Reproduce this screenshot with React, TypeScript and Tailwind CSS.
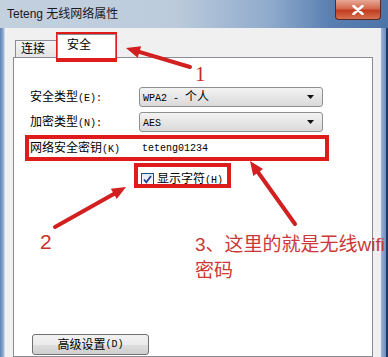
import React from 'react'

const ui = "font-['Liberation_Sans','Noto_Sans_CJK_SC',sans-serif]"
const mono = "font-['Liberation_Mono','Noto_Sans_CJK_SC',monospace]"

// Ascii parts in the dialog are drawn half-width, like SimSun 12px
function Asc({ children }: { children: React.ReactNode }) {
  return <span className={`${mono} text-[10px]`}>{children}</span>
}

function Select({ value }: { value: React.ReactNode }) {
  return (
    <div className="flex h-[20px] w-[184px] items-center justify-between rounded-[3px] border border-[#8e8f8f] bg-[linear-gradient(#f3f3f3,#e6e6e6_50%,#dadada)] pl-[3px] pr-[8px] text-[12px] text-black">
      <span className="leading-none">{value}</span>
      <svg width="7" height="4" viewBox="0 0 7 4">
        <path d="M0 0h7L3.5 4z" fill="#111" />
      </svg>
    </div>
  )
}

function Arrow({ x1, y1, x2, y2 }: { x1: number; y1: number; x2: number; y2: number }) {
  const dx = x2 - x1
  const dy = y2 - y1
  const len = Math.hypot(dx, dy)
  const ux = dx / len
  const uy = dy / len
  const bx = x2 - ux * 14
  const by = y2 - uy * 14
  const pts = `${x2},${y2} ${bx - uy * 6},${by + ux * 6} ${bx + uy * 6},${by - ux * 6}`
  return (
    <g>
      <line x1={x1} y1={y1} x2={bx + ux * 2} y2={by + uy * 2} stroke="#d21f1f" strokeWidth="4" strokeLinecap="round" />
      <polygon points={pts} fill="#d21f1f" />
    </g>
  )
}

export default function App() {
  return (
    <div className={`relative flex h-[357px] w-[388px] flex-col overflow-hidden bg-[#5d84b6] ${ui}`}>
      {/* Title bar */}
      <div className="relative flex h-[28px] shrink-0 items-center bg-[linear-gradient(to_right,#c3d0de,#bccbdc_45%,#8eaacb_70%,#5a80b2_85%,#4d74a8)] pl-[7px]">
        <span className="text-[12px] leading-none text-[#1a1a1a]">Teteng 无线网络属性</span>
        <div className="absolute right-[7px] top-0 flex h-[20px] w-[46px] items-center justify-center rounded-b-[4px] border border-t-0 border-[#5a2a22] bg-[linear-gradient(#e8a896,#d5694d_45%,#c23c20_55%,#d6714f)]">
          <svg width="12" height="10" viewBox="0 0 12 10">
            <path d="M1.5 1l9 8M10.5 1l-9 8" stroke="#fff" strokeWidth="2.6" strokeLinecap="round" />
          </svg>
        </div>
      </div>

      <div className="flex flex-1">
        {/* left frame */}
        <div className="w-[5px] bg-[linear-gradient(to_right,#5d84b6,#8aa6cc_60%,#dfe7f1)]" />

        {/* client area */}
        <div className="flex flex-1 flex-col bg-[#f0f0f0] pl-[8px] pr-[7px] pt-[6px]">
          {/* tabs */}
          <div className="flex h-[23px] items-end pl-[2px] text-[12px]">
            <div className="flex h-[17px] w-[42px] items-center border border-b-0 border-[#898c95] bg-[linear-gradient(#f4f4f4,#e4e4e4)] pl-[5px]">
              连接
            </div>
            <div className="z-10 -mb-px flex h-[24px] w-[59px] items-center border border-b-0 border-[#898c95] bg-white pb-[3px] pl-[9px]">
              安全
            </div>
          </div>

          {/* tab panel */}
          <div className="flex flex-1 flex-col border border-[#898c95] bg-white pl-[16px] text-[12px] text-black">
            <div className="mt-[29px] flex items-center">
              <div className="w-[109px]">
                安全类型<Asc>(E):</Asc>
              </div>
              <Select value={<><Asc>WPA2 - </Asc>个人</>} />
            </div>
            <div className="mt-[5px] flex items-center">
              <div className="w-[109px]">
                加密类型<Asc>(N):</Asc>
              </div>
              <Select value={<Asc>AES</Asc>} />
            </div>
            <div className="mt-[6px] flex h-[20px] items-center">
              <div className="w-[109px]">
                网络安全密钥<Asc>(K)</Asc>
              </div>
              <span className={`${mono} pl-[3px] text-[10px]`}>teteng01234</span>
            </div>
            <div className="mt-[12px] flex items-center pl-[111px]">
              <div className="flex h-[13px] w-[13px] items-center justify-center border border-[#1d4f82] bg-[linear-gradient(#dfe9f5,#fff)]">
                <svg width="9" height="9" viewBox="0 0 9 9">
                  <path d="M1 4.5l2.3 2.8L8 1" stroke="#21408c" strokeWidth="1.8" fill="none" />
                </svg>
              </div>
              <span className="ml-[3px]">
                显示字符<Asc>(H)</Asc>
              </span>
            </div>
            <button className="ml-[2px] mt-[146px] flex h-[21px] w-[117px] items-center justify-center rounded-[3px] border border-[#707070] bg-[linear-gradient(#f2f2f2,#ebebeb_50%,#dddddd_51%,#cfcfcf)] text-[12px] text-black">
              高级设置<Asc>(D)</Asc>
            </button>
          </div>
        </div>

        {/* right frame */}
        <div className="flex w-[8px]">
          <div className="w-[1px] bg-[#e9eef5]" />
          <div className="w-[5px] bg-[linear-gradient(to_right,#9db4d6,#6b8dc0)]" />
          <div className="w-[2px] bg-[#1d3a66]" />
        </div>
      </div>

      {/* annotations */}
      <div className="absolute left-[56px] top-[32px] h-[30px] w-[61px] border-[4px] border-[#e01b1b]" />
      <div className="absolute left-[25px] top-[135px] h-[26px] w-[304px] border-[4px] border-[#e01b1b]" />
      <div className="absolute left-[134px] top-[163px] h-[25px] w-[97px] border-[4px] border-[#e01b1b]" />

      <svg className="pointer-events-none absolute left-0 top-0" width="388" height="357">
        <Arrow x1={190} y1={67} x2={126} y2={48} />
        <Arrow x1={55} y1={227} x2={126} y2={187} />
        <Arrow x1={295} y1={224} x2={250} y2={161} />
      </svg>

      <span className="absolute left-[195px] top-[64px] font-['Liberation_Serif',serif] text-[21px] leading-none text-[#c4282a]">
        1
      </span>
      <span className="absolute left-[40px] top-[231px] text-[21px] leading-none text-[#c83030]">
        2
      </span>
      <div className="absolute left-[195px] top-[232px] whitespace-nowrap text-[19px] leading-[26px] text-[#cc3838]">
        3、这里的就是无线wifi
        <br />
        密码
      </div>
    </div>
  )
}
